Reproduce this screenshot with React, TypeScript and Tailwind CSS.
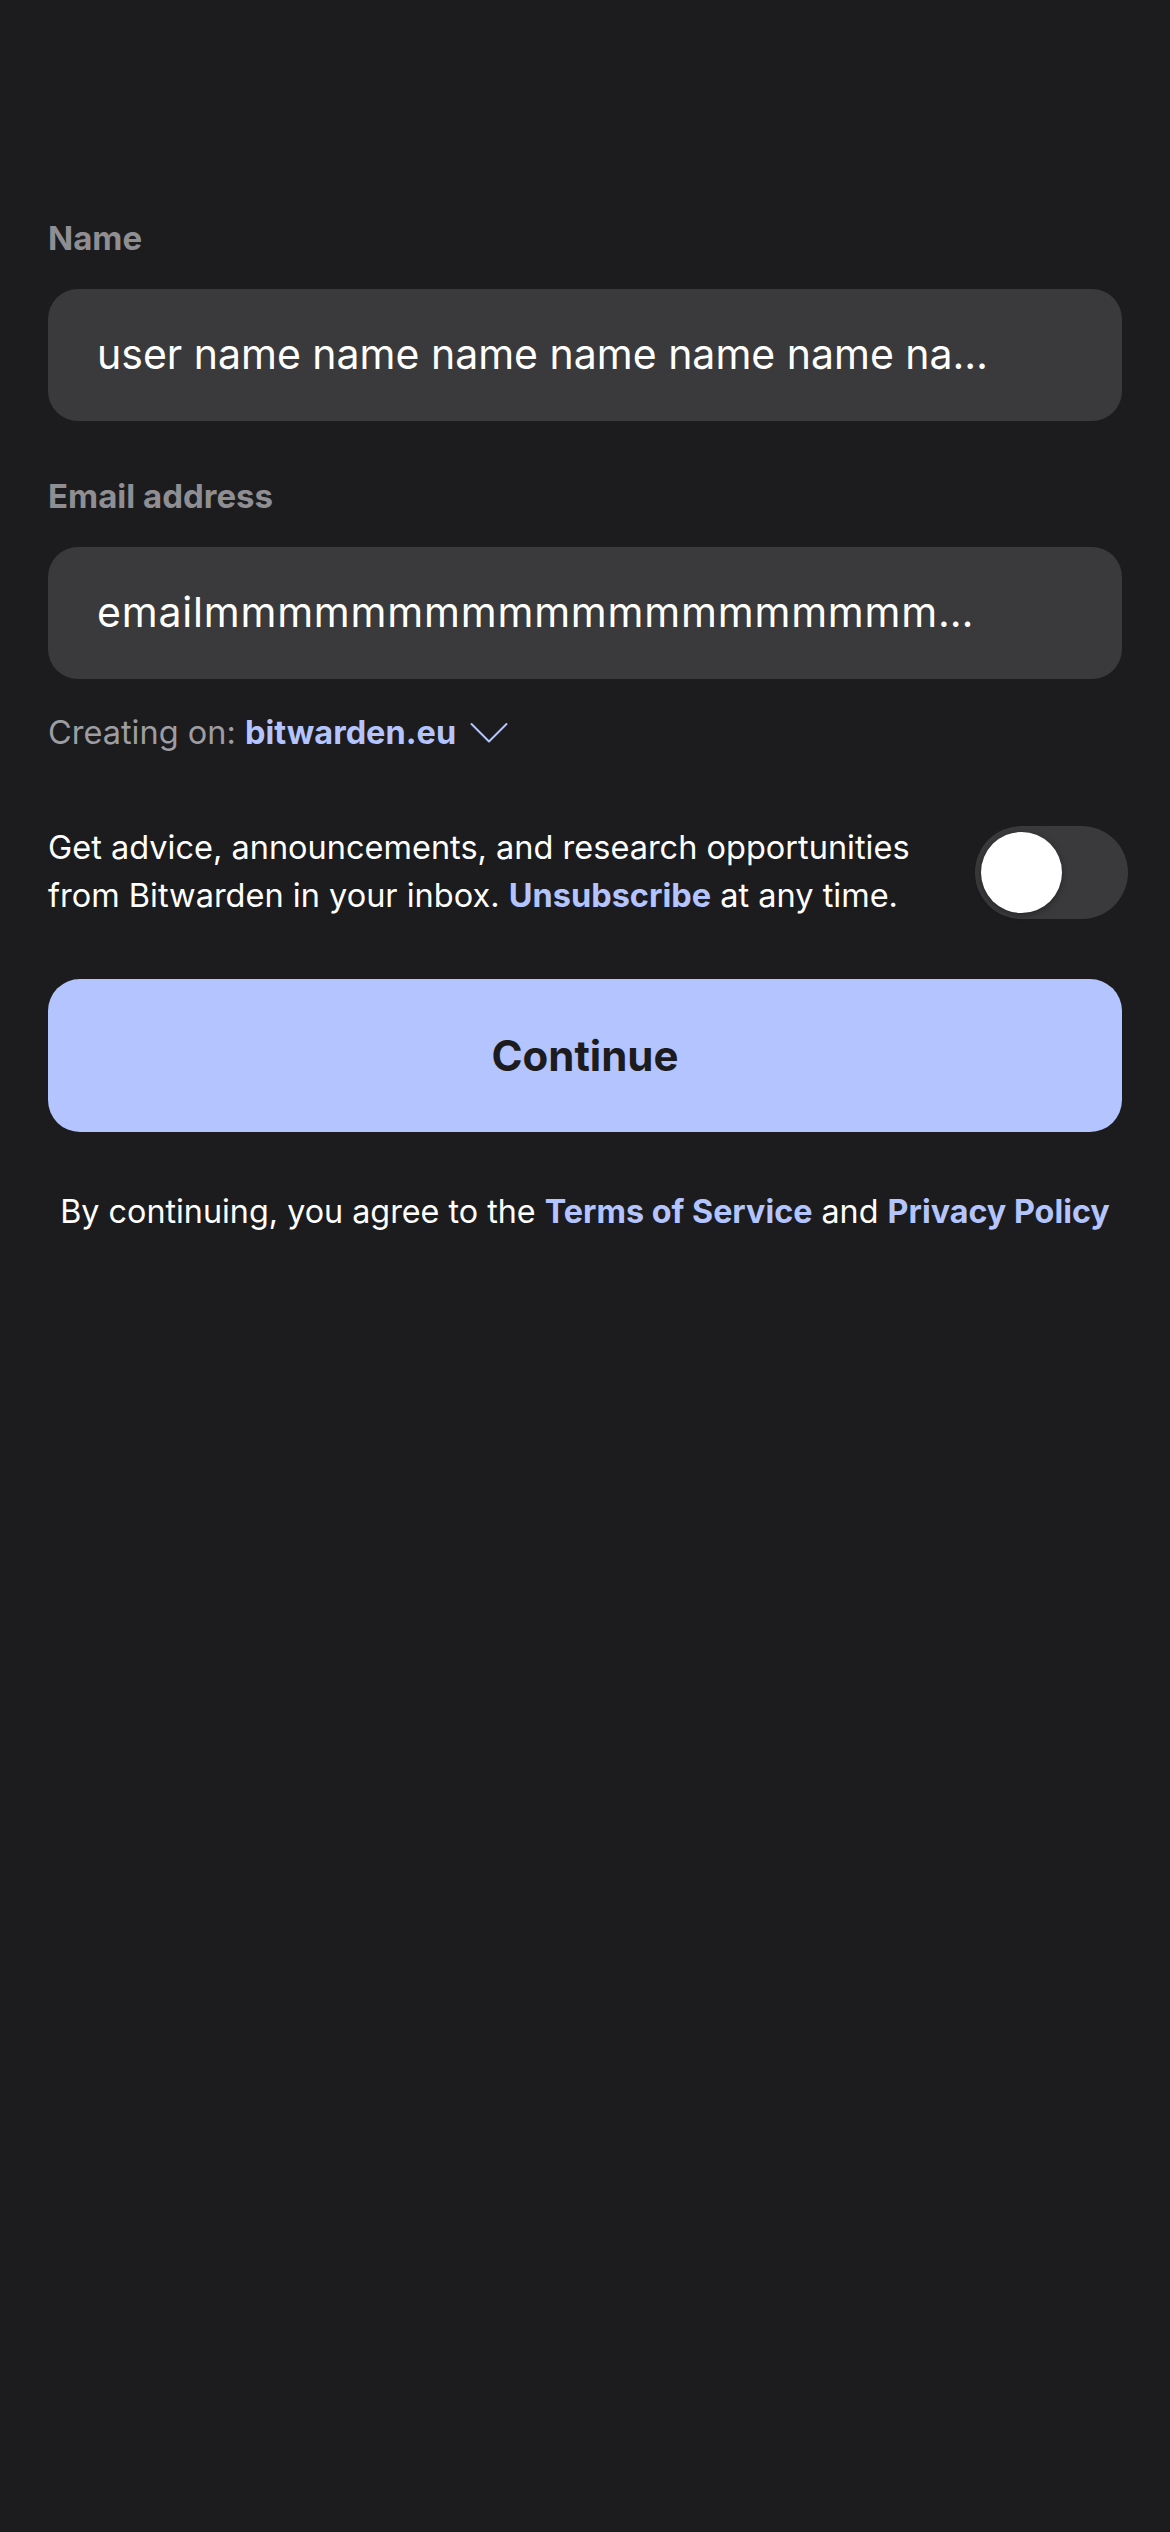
import React from "react";

const BLUE = "text-[#b4c4fe]";

function Field({ label, value, wide }: { label: string; value: string; wide?: boolean }) {
  return (
    <div>
      <div className="text-[33px] leading-[36px] font-bold text-[#8e8e93]">{label}</div>
      <div className="mt-[33px] flex h-[132px] items-center rounded-[30px] bg-[#3a3a3c] pl-[49px] pr-[48px]">
        <div className={`truncate text-[41px] text-white ${wide ? "tracking-[0.8px]" : ""}`}>{value}</div>
      </div>
    </div>
  );
}

function Chevron() {
  return (
    <svg width="38" height="22" viewBox="0 0 38 22" fill="none" className="ml-[14px]">
      <path d="M1.5 2 L19 19.5 L36.5 2" stroke="#b4c4fe" strokeWidth="2" strokeLinecap="round" strokeLinejoin="round" />
    </svg>
  );
}

function Toggle() {
  return (
    <div className="flex h-[93px] w-[153px] shrink-0 items-center rounded-full bg-[#3a3a3c] pl-[6px] -mr-[6px]">
      <div className="h-[81px] w-[81px] rounded-full bg-white shadow-[0_2px_6px_rgba(0,0,0,0.35)]" />
    </div>
  );
}

export default function App() {
  return (
    <div
      className="min-h-[2532px] w-[1170px] bg-[#1c1c1e] px-[48px] pt-[220px]"
      style={{ fontFamily: "Inter, 'Noto Sans', sans-serif" }}
    >
      <Field label="Name" value="user name name name name name name na…" />

      <div className="mt-[57px]">
        <Field label="Email address" value="emailmmmmmmmmmmmmmmmmmmmm…" wide />
      </div>

      <div className="mt-[34px] flex items-center text-[32.5px] leading-[40px]">
        <span className="text-[#9d9da2]">Creating on:&nbsp;</span>
        <span className={`font-bold ${BLUE}`}>bitwarden.eu</span>
        <Chevron />
      </div>

      <div className="mt-[71px] flex items-center justify-between gap-[36px]">
        <p className="text-[32.5px] leading-[48px] text-white">
          Get advice, announcements, and research opportunities
          <br />
          from Bitwarden in your inbox. <span className={`font-bold ${BLUE}`}>Unsubscribe</span> at any time.
        </p>
        <Toggle />
      </div>

      <button
        type="button"
        className="mt-[59px] flex h-[153px] w-full items-center justify-center rounded-[32px] bg-[#b4c4fe] text-[42px] font-bold text-[#1c1c1e]"
      >
        Continue
      </button>

      <p className="mt-[60px] whitespace-nowrap text-center text-[32.3px] leading-[40px] text-white">
        By continuing, you agree to the <span className={`font-bold ${BLUE}`}>Terms of Service</span> and{" "}
        <span className={`font-bold ${BLUE}`}>Privacy Policy</span>
      </p>
    </div>
  );
}
